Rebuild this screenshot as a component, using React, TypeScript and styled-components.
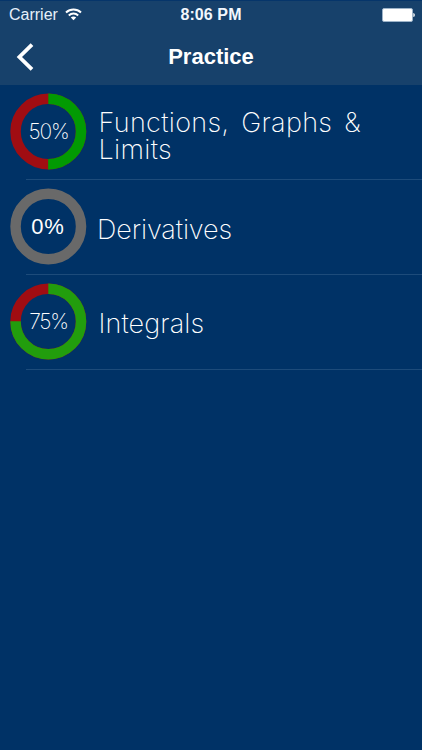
import React from "react";
import styled, { createGlobalStyle } from "styled-components";

const GlobalStyle = createGlobalStyle`
  * { box-sizing: border-box; }
  body { margin: 0; background: #003266; }
`;

const Screen = styled.main`
  width: 422px;
  height: 750px;
  overflow: hidden;
  background: #003266;
  color: #fff;
  font-family: "Liberation Sans", Arial, sans-serif;
`;

const Header = styled.header`
  height: 85px;
  background: #17416b;
  border-top: 1px solid #06356a;
`;

const StatusBar = styled.div`
  height: 27px;
  padding: 0 7px 0 9px;
  display: grid;
  grid-template-columns: 1fr auto 1fr;
  align-items: center;
  font-size: 16px;
  line-height: 27px;
`;

const Carrier = styled.div`
  display: flex;
  align-items: center;
  gap: 7px;
  color: #e6f0fa;
`;

const Clock = styled.div`
  margin-left: -2px;
  font-weight: 700;
  letter-spacing: 0.1px;
  color: #f2f7fd;
`;

const BatteryIcon = styled.svg`
  justify-self: end;
`;

const NavBar = styled.nav`
  height: 57px;
  padding-left: 16px;
  display: grid;
  grid-template-columns: 60px 1fr 76px;
  align-items: center;
`;

const BackButton = styled.button`
  display: flex;
  padding: 0;
  border: 0;
  background: none;
`;

const Heading = styled.h1`
  margin: 0;
  text-align: center;
  font-size: 22px;
  line-height: 28px;
`;

const Topics = styled.ul`
  margin: 0;
  padding: 0;
  list-style: none;
`;

const Topic = styled.li`
  height: 95px;
  display: flex;
  align-items: center;
  padding-left: 10px;
  background: linear-gradient(#1d4b7a, #1d4b7a) 26px 100% / 396px 1px no-repeat;
`;

const Gauge = styled.div`
  display: grid;
  width: 77px;
  height: 77px;
  margin: 0 12px 2px 0;
  place-items: center;
  > * { grid-area: 1 / 1; }
`;

const Percent = styled.span<{ $plain: boolean }>`
  font-family: ${(p) => (p.$plain ? '"Liberation Sans", Arial' : "Inter")}, sans-serif;
  font-weight: ${(p) => (p.$plain ? 400 : 200)};
  font-size: ${(p) => (p.$plain ? 22 : 21)}px;
  letter-spacing: ${(p) => (p.$plain ? 0.8 : -1.2)}px;
  line-height: 24px;
  margin-left: ${(p) => (p.$plain ? -1 : 0)}px;
`;

const Label = styled.span<{ $tracking: number; $left: number; $top: number }>`
  font-family: Inter, sans-serif;
  font-weight: 200;
  font-size: 27px;
  line-height: 27px;
  white-space: pre-line;
  margin-left: ${(p) => p.$left}px;
  padding-top: ${(p) => p.$top}px;
  letter-spacing: ${(p) => p.$tracking}px;
  word-spacing: 4px;
`;

const R = 32.75;
const LENGTH = 2 * Math.PI * R;

const topics = [
  { name: "Functions, Graphs &\nLimits", score: 50, done: "#029a03", rest: "#a00d12", tracking: 0.33, left: -0.5, top: 6 },
  { name: "Derivatives", score: 0, done: "#696969", rest: "#696969", tracking: -0.1, left: -2, top: 4 },
  { name: "Integrals", score: 75, done: "#229d0d", rest: "#a00d12", tracking: 0.1, left: -0.5, top: 2 },
];

export default function App() {
  return (
    <Screen>
      <GlobalStyle />
      <Header>
        <StatusBar>
          <Carrier>
            Carrier
            <svg width="17" height="13" viewBox="0 0 17 13" fill="none" stroke="#fff" strokeWidth="2">
              <path d="M1 4.4C5.2.5 11.8.5 16 4.4M3.8 7.4c2.7-2.5 6.7-2.5 9.4 0" />
              <path d="M8.5 12.2 5.8 9.4c1.5-1.3 3.9-1.3 5.4 0z" fill="#fff" stroke="none" />
            </svg>
          </Carrier>
          <Clock>8:06 PM</Clock>
          <BatteryIcon width="33" height="14" viewBox="0 0 33 14">
            <rect x="0.5" y="0.5" width="30" height="13" rx="1.5" fill="#fff" stroke="#9db3c8" />
            <path d="M31.3 5c2 0 2 4 0 4z" fill="#fff" />
          </BatteryIcon>
        </StatusBar>
        <NavBar>
          <BackButton aria-label="Back">
            <svg width="18" height="28" viewBox="0 0 18 28" fill="none" stroke="#fff" strokeWidth="3.8">
              <path d="M16 1.6 3.4 14 16 26.4" />
            </svg>
          </BackButton>
          <Heading>Practice</Heading>
        </NavBar>
      </Header>
      <Topics>
        {topics.map((t) => (
          <Topic key={t.name}>
            <Gauge>
              <svg width="77" height="77" viewBox="0 0 77 77" fill="none" strokeWidth="10.5">
                <circle cx="38.3" cy="38.5" r={R} stroke={t.rest} />
                {t.score > 0 && (
                  <circle
                    cx="38.3"
                    cy="38.5"
                    r={R}
                    stroke={t.done}
                    strokeDasharray={`${(LENGTH * t.score) / 100} ${LENGTH}`}
                    transform="rotate(-90 38.3 38.5)"
                  />
                )}
              </svg>
              <Percent $plain={t.score === 0}>{t.score}%</Percent>
            </Gauge>
            <Label $tracking={t.tracking} $left={t.left} $top={t.top}>{t.name}</Label>
          </Topic>
        ))}
      </Topics>
    </Screen>
  );
}
